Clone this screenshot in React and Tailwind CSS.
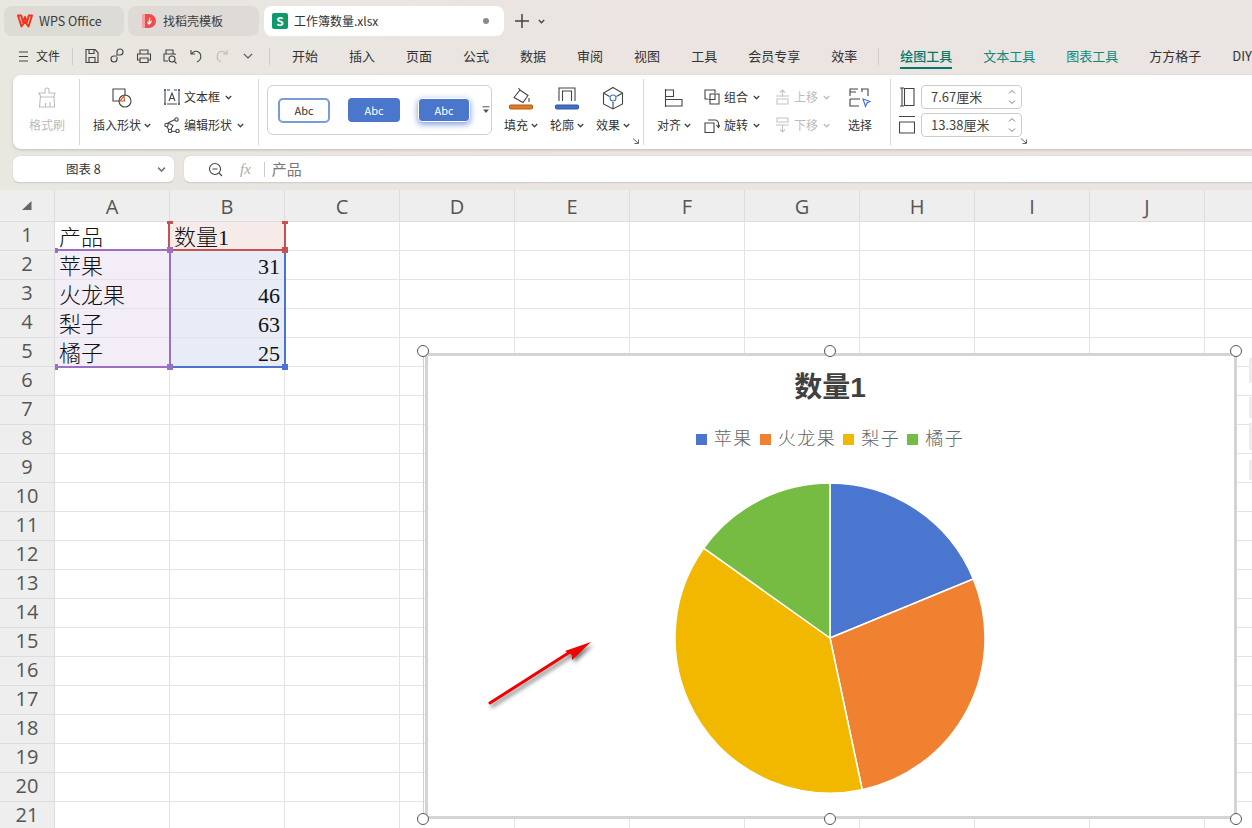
import React from "react";

const S = ({ w = 16, h = 16, vb, children, className = "" }) => (
  <svg width={w} height={h} viewBox={vb || `0 0 ${w} ${h}`} fill="none" stroke="#444" strokeWidth="1.1" className={"shrink-0 " + className}>
    {children}
  </svg>
);

const Caret = ({ c = "#444", className = "" }) => (
  <svg width="7" height="5" viewBox="0 0 7 5" fill="none" stroke={c} strokeWidth="1.3" className={"shrink-0 " + className}>
    <path d="M.8 1 3.5 3.8 6.2 1" />
  </svg>
);

const Launcher = ({ className = "" }) => (
  <svg width="6" height="6" viewBox="0 0 6 6" fill="none" stroke="#666" strokeWidth="1" className={className}>
    <path d="M0 .5 5 5M5.5 1.5v4h-4" />
  </svg>
);

const Big = ({ w, icon, label, caret = true, className = "" }) => (
  <div className={"flex flex-col items-center pt-[1px] shrink-0 " + className} style={{ width: w }}>
    <div className="h-[36px] flex items-center justify-center">{icon}</div>
    <div className="h-[18px] flex items-center gap-[3px] text-[12px] text-[#333] whitespace-nowrap">
      {label}
      {caret && <Caret />}
    </div>
  </div>
);

const Small = ({ icon, label, gray, w }) => (
  <div className="h-[18px] flex items-center gap-[4px] whitespace-nowrap" style={{ width: w }}>
    {icon}
    <span className={"text-[12px] " + (gray ? "text-[#bbb]" : "text-[#333]")}>{label}</span>
    <Caret c={gray ? "#bbb" : "#444"} className="ml-[1px]" />
  </div>
);

const Tabs = () => (
  <div className="flex h-[37px] pt-[6px] pl-[4px] items-start">
    <div className="w-[120px] h-[30px] rounded-lg bg-[#dcdbd5] flex items-center pl-[13px] gap-[6px] text-[12.5px] text-[#3a3a3a]">
      <svg width="16" height="14" viewBox="0 0 16 14" fill="none" stroke="#f2351f" strokeWidth="2">
        <path d="M1 1.500h3.200L6 8l2-5 2 5 1.800-6.500H15L11.500 12.500 8 7.500l-3.500 5z" strokeLinejoin="round" />
      </svg>
      <span>WPS Office</span>
    </div>
    <div className="w-[131px] h-[30px] ml-[4px] rounded-lg bg-[#dedbd6] flex items-center pl-[14px] gap-[7px] text-[12px] text-[#3a3a3a]">
      <svg width="14" height="16" viewBox="0 0 14 16">
        <path d="M0 1h7a7 7 0 0 1 0 14H0z" fill="#ee4d4d" />
        <path d="M0 1h3v14H0z" fill="#f5a3a0" />
        <path d="M8 4c.6 2-.3 3 .2 5 .5-1 1-1.300 1.800-1.700-.3 2-1.300 4-3 4.500C5.500 11 5 9.500 5.500 8c.3 1 .7 1.300 1.200 1.500C6.500 7.500 7 5.500 8 4z" fill="#fff" />
      </svg>
      <span>找稻壳模板</span>
    </div>
    <div className="w-[240px] h-[30px] ml-[5px] rounded-lg bg-white flex items-center pl-[8px] text-[12px] text-[#333]">
      <div className="w-[16px] h-[16px] rounded-[2px] bg-[#0d9a6c] text-white text-[12px] font-bold leading-[16px] text-center">S</div>
      <span className="ml-[6px]">工作簿数量.xlsx</span>
      <span className="ml-auto mr-[15px] w-[6px] h-[6px] rounded-full bg-[#8a8a8a]" />
    </div>
    <svg width="16" height="16" viewBox="0 0 16 16" stroke="#444" strokeWidth="1.5" className="ml-[10px] mt-[7px]">
      <path d="M8 1v14M1 8h14" />
    </svg>
    <Caret className="ml-[8px] mt-[13px]" />
  </div>
);

const qa = [
  <S key="1"><path d="M2 1.500h9l3 3v10H2zM5 1.500v4h5v-4M5 14.500v-5h6v5" /></S>,
  <S key="2"><path d="M7 7V4a3 3 0 1 1 3 3H7M7 9v2a3 3 0 1 1-3-3h3" /></S>,
  <S key="3"><path d="M4 6V2h8v4M4 12H1.500V6h13v6H12M4 10h8v4.500H4z" /></S>,
  <S key="4"><path d="M6 13H2V6h11v1M4 6V2h7v4" /><circle cx="10" cy="11" r="3" /><path d="m12.200 13.200 2.300 2.300" /></S>,
  <S key="5"><path d="M3 2v4h4M3.500 6C5 3.500 8 2.500 10.500 4c2.500 1.500 3 5 1.500 7.500-.8 1.200-1.800 2-3 2.500" /></S>,
  <S key="6"><g stroke="#bbb"><path d="M13 2v4H9M12.500 6C11 3.500 8 2.500 5.500 4c-2.500 1.500-3 5-1.500 7.500.8 1.200 1.800 2 3 2.500" /></g></S>,
  <div key="7" className="w-[16px] flex justify-center"><svg width="10" height="6" viewBox="0 0 10 6" fill="none" stroke="#555" strokeWidth="1.200"><path d="M.8.8 5 5 9.200.8" /></svg></div>,
];

const menuA = ["开始", "插入", "页面", "公式", "数据", "审阅", "视图", "工具", "会员专享", "效率"];

const Menu = () => (
  <div className="flex h-[38px] items-start pt-[6px] text-[13px] text-[#333] whitespace-nowrap overflow-hidden">
    <div className="h-[26px] flex items-center ml-[19px]">
      <svg width="9" height="11" viewBox="0 0 9 11" stroke="#444" strokeWidth="1.100"><path d="M0 1h9M0 5.500h9M0 10h9" /></svg>
      <span className="ml-[8px] text-[12px]">文件</span>
      <span className="ml-[12px] w-[1px] h-[17px] bg-[#cfcdc8]" />
    </div>
    <div className="h-[26px] flex items-center gap-[10px] ml-[11px]">{qa}</div>
    <div className="h-[26px] flex items-center ml-[13px]"><span className="w-[1px] h-[17px] bg-[#cfcdc8]" /></div>
    <div className="flex gap-[31px] ml-[22px]">
      {menuA.map((m) => (
        <span key={m} className="h-[26px] flex items-center">{m}</span>
      ))}
    </div>
    <div className="h-[26px] flex items-center mx-[21px]"><span className="w-[1px] h-[17px] bg-[#cfcdc8]" /></div>
    <div className="flex gap-[31px]">
      <span className="h-[26px] flex items-center border-y-2 border-t-transparent border-b-[#04796b] text-[#04796b] font-medium">绘图工具</span>
      <span className="h-[26px] flex items-center text-[#0c8a7c]">文本工具</span>
      <span className="h-[26px] flex items-center text-[#0c8a7c]">图表工具</span>
      <span className="h-[26px] flex items-center">方方格子</span>
      <span className="h-[26px] flex items-center">DIY</span>
    </div>
  </div>
);

const Ribbon = () => (
  <div className="ml-[13px] h-[74px] rounded-l-lg bg-white shadow-[0_1px_3px_rgba(0,0,0,0.18)] pt-[4px] flex overflow-hidden">
    {/* format painter */}
    <div className="w-[67px] h-[66px] border-r border-[#d8d8d8] shrink-0 flex justify-center pl-[2px]">
      <Big
        w={50}
        caret={false}
        label={<span className="text-[#bbb]">格式刷</span>}
        icon={
          <S w={20} h={22} vb="0 0 20 22">
            <g stroke="#bdbdbd"><path d="M8 6V3a2 2 0 0 1 4 0v3h6l-1 3 .500 11H2.500L3.500 9 2 6zM3 10h14.500M13 15v5M8.500 16v4" /></g>
          </S>
        }
      />
    </div>
    {/* shapes */}
    <div className="w-[179px] h-[66px] border-r border-[#d8d8d8] shrink-0 flex">
      <Big
        w={70}
        className="ml-[7px]"
        label="插入形状"
        icon={
          <S w={22} h={22}>
            <path d="M9 14H2V2h12v7" />
            <circle cx="14" cy="14" r="6" />
            <path d="M9 14l4-5 .500 5z" stroke="#d4521a" fill="#fff" />
          </S>
        }
      />
      <div className="flex flex-col gap-[10px] pt-[9px] ml-[7px]">
        <Small
          label="文本框"
          icon={
            <S w={16} h={16}>
              <path d="M1 1v14M15 1v14M3 1h3M10 1h3M3 15h10M5 12l3-8 3 8M6.200 9.500h3.600" />
              <path d="M0 0h2v2H0zM14 0h2v2h-2zM0 14h2v2H0zM14 14h2v2h-2z" fill="#3b6fd4" stroke="none" />
            </S>
          }
        />
        <Small
          label="编辑形状"
          icon={
            <S w={16} h={16}>
              <path d="M11 2.500 4 6 2.500 9l3 5 7 .5M4 6l5 2.500-3 5.500" />
              <circle cx="12.500" cy="2.500" r="1.700" fill="#fff" />
              <circle cx="2.500" cy="8" r="1.700" fill="#fff" />
              <circle cx="6" cy="14" r="1.700" fill="#fff" />
              <circle cx="13.500" cy="14" r="1.700" fill="#fff" />
            </S>
          }
        />
      </div>
    </div>
    {/* gallery + fill */}
    <div className="w-[385px] h-[66px] border-r border-[#d8d8d8] shrink-0 relative flex">
      <div className="ml-[8px] mt-[6px] w-[225px] h-[50px] rounded-md border border-[#cfcfcf] flex items-center pl-[10px] text-[11px] shrink-0">
        <div className="w-[52px] h-[25px] rounded-[5px] border-2 border-[#7b9ad9] flex items-center justify-center text-[#333]">Abc</div>
        <div className="w-[52px] h-[24px] ml-[18px] rounded-[4px] bg-[#4a76cc] flex items-center justify-center text-white">Abc</div>
        <div className="w-[52px] h-[24px] ml-[18px] rounded-[4px] bg-[#4a76cc] border border-white flex items-center justify-center text-white shadow-[0_2px_6px_rgba(60,100,200,0.7)]">Abc</div>
        <svg width="8" height="8" viewBox="0 0 8 8" className="ml-[12px] shrink-0" fill="#555" stroke="#555">
          <path d="M.5.800h7" />
          <path d="M1 3.500h6L4 7z" stroke="none" />
        </svg>
      </div>
      <div className="flex ml-[6px]">
        <Big
          w={46}
          label="填充"
          icon={
            <svg width="24" height="24" viewBox="0 0 24 24" fill="none" stroke="#444" strokeWidth="1.100">
              <path d="M5 11.500 11 4l8 5.500-5 7z" />
              <path d="M11 4 9.500 2M20 12v4" />
              <rect x="0.500" y="19" width="23" height="4" rx="1.500" fill="#e87722" stroke="#a9601f" />
            </svg>
          }
        />
        <Big
          w={46}
          label="轮廓"
          icon={
            <svg width="24" height="24" viewBox="0 0 24 24" fill="none" stroke="#444" strokeWidth="1.100">
              <path d="M4 15V2h16v13M7.500 15V5h9v10" />
              <rect x="0.500" y="19" width="23" height="4" rx="1.500" fill="#3f6ec9" stroke="#345a9f" />
            </svg>
          }
        />
        <Big
          w={46}
          label="效果"
          icon={
            <svg width="22" height="24" viewBox="0 0 22 24" fill="none" stroke="#444" strokeWidth="1.100">
              <path d="M11 1.500 20.500 7v11L11 23 1.500 18V7zM1.500 7l6 3.500M20.500 7l-6 3.500M11 16v7" />
              <circle cx="11" cy="12" r="3" stroke="#3d6fe0" />
            </svg>
          }
        />
      </div>
      <Launcher className="absolute right-[4px] bottom-[1px]" />
    </div>
    {/* arrange */}
    <div className="w-[247px] h-[66px] border-r border-[#d8d8d8] shrink-0 flex">
      <Big
        w={46}
        className="ml-[7px]"
        label="对齐"
        icon={
          <S w={20} h={20}>
            <path d="M1.500 1v18M1.500 2h8v6.500h-8M1.500 11.500H18V18H1.500" />
          </S>
        }
      />
      <div className="flex flex-col gap-[10px] pt-[9px] ml-[7px] w-[71px]">
        <Small
          label="组合"
          icon={
            <S w={16} h={16}>
              <path d="M4 10H1V1h10v3M6 5h9v10H6z" />
              <path d="M4.500 10.500H11V5" />
            </S>
          }
        />
        <Small
          label="旋转"
          icon={
            <S w={16} h={16}>
              <path d="M1 6h9v9.500H1zM4 3h7a3.500 3.500 0 0 1 3.500 3.500v3.500M12.500 8l2 2.500 1.500-2.500" />
            </S>
          }
        />
      </div>
      <div className="flex flex-col gap-[10px] pt-[9px]">
        <Small
          gray
          label="上移"
          icon={
            <S w={15} h={16}>
              <g stroke="#c4c4c4"><path d="M7.500 8V1M5 3.500 7.500 1 10 3.500M1 7h13M2 10h11v5H2z" /></g>
            </S>
          }
        />
        <Small
          gray
          label="下移"
          icon={
            <S w={15} h={16}>
              <g stroke="#c4c4c4"><path d="M2 1h11v4H2zM1 8h13M7.500 8v7M5 12.500 7.500 15 10 12.500" /></g>
            </S>
          }
        />
      </div>
      <Big
        w={40}
        className="ml-[10px]"
        caret={false}
        label="选择"
        icon={
          <svg width="22" height="20" viewBox="0 0 22 20" fill="none" stroke="#444" strokeWidth="1.100">
            <path d="M1 8V1h8M12 1h7v7M7 4H1M13 4V1M1 11v7h9M1 11h10" />
            <path d="M14 11l7 2.500-3 1.500-1.500 3.500z" stroke="#3d6fe0" fill="#fff" />
          </svg>
        }
      />
    </div>
    {/* size */}
    <div className="relative w-[140px] h-[66px] shrink-0 flex flex-col gap-[4px] pt-[6px] pl-[8px]">
      {[
        { v: "7.67厘米", ic: "M1 1h4M1 19h4M3 1v18M5.500 1.500H15v17H5.500z" },
        { v: "13.38厘米", ic: "M0 1.500h16M0 7h15.500v11H.5V7" },
      ].map((r) => (
        <div key={r.v} className="flex items-center h-[24px]">
          <S w={16} h={20}><path d={r.ic} /></S>
          <div className="ml-[6px] w-[101px] h-[24px] rounded-[4px] border border-[#cccccc] flex items-center pl-[9px] text-[13px] text-[#444]">
            {r.v}
            <svg width="8" height="16" viewBox="0 0 8 16" fill="none" stroke="#777" strokeWidth="1" className="ml-auto mr-[5px]">
              <path d="M1 4.500 4 1.500l3 3M1 11.500l3 3 3-3" />
            </svg>
          </div>
        </div>
      ))}
      <Launcher className="absolute left-[130px] bottom-[1px]" />
    </div>
  </div>
);

const FormulaBar = () => (
  <div className="flex h-[27px] mt-[7px] ml-[13px] gap-[10px]">
    <div className="w-[161px] h-[27px] bg-white rounded-md border-b border-[#cfcfcf] shadow-[0_0_1px_rgba(0,0,0,0.25)] flex items-center text-[12.5px] text-[#333]">
      <span className="ml-[53px] pt-[1px]">图表 8</span>
      <Caret c="#777" className="ml-auto mr-[9px] scale-125" />
    </div>
    <div className="flex-1 h-[27px] bg-white rounded-l-md border-b border-[#cfcfcf] shadow-[0_0_1px_rgba(0,0,0,0.25)] flex items-center">
      <S w={15} h={15} className="ml-[24px]">
        <circle cx="7" cy="7" r="5.500" />
        <path d="M4.500 7h5M11 11l3 3" />
      </S>
      <span className="ml-[17px] font-['Liberation_Serif',serif] italic text-[15px] text-[#aaa]">fx</span>
      <span className="ml-[13px] w-[1px] h-[15px] bg-[#ccc]" />
      <span className="ml-[7px] text-[15px] text-[#777]">产品</span>
    </div>
  </div>
);

const COLS = ["A", "B", "C", "D", "E", "F", "G", "H", "I", "J", ""];
const ROWS = Array.from({ length: 21 }, (_, i) => i + 1);
const DATA = {
  1: ["产品", "数量1"],
  2: ["苹果", "31"],
  3: ["火龙果", "46"],
  4: ["梨子", "63"],
  5: ["橘子", "25"],
};

const cellBg = (r, c) => {
  if (c === 0 && r >= 2 && r <= 5) return "bg-[#f2edf7]";
  if (c === 1 && r === 1) return "bg-[#f7ebe9]";
  if (c === 1 && r >= 2 && r <= 5) return "bg-[#e8ecf7]";
  return "bg-white";
};

const Handle = ({ c, cls }) => (
  <span className={"absolute w-[6px] h-[6px] " + c + " " + cls} />
);

const Grid = () => (
  <div>
    <div className="flex h-[32px] bg-[#eeeeee] border-b border-[#dddddd]">
      <div className="w-[55px] h-full border-r border-[#dddddd] flex items-center justify-center shrink-0">
        <svg width="10" height="9" viewBox="0 0 10 9"><path d="M9.500 0v9H0z" fill="#666" /></svg>
      </div>
      {COLS.map((c, i) => (
        <div key={i} className="w-[115px] h-full shrink-0 border-r border-[#dddddd] flex items-center justify-center pt-[3px] text-[20px] text-[#555] font-['Open_Sans',sans-serif]">
          {c}
        </div>
      ))}
    </div>
    {ROWS.map((r) => (
      <div key={r} className="flex h-[29px]">
        <div className="w-[55px] shrink-0 bg-[#eeeeee] border-r border-b border-[#dddddd] flex items-center justify-center pb-[2px] text-[20px] text-[#555] font-['Open_Sans',sans-serif]">
          {r}
        </div>
        {COLS.map((c, ci) => {
          const v = DATA[r] && DATA[r][ci];
          const num = v && /^\d+$/.test(v);
          return (
            <div
              key={ci}
              className={
                "w-[115px] shrink-0 border-r border-b border-[#e4e4e4] flex items-center overflow-hidden text-[22px] text-[#111] font-['Liberation_Serif','Noto_Sans_CJK_SC',serif] font-light leading-none pt-[3px] " +
                (num ? "justify-end pr-[4px] " : "pl-[4px] ") +
                cellBg(r, ci)
              }
            >
              {v}
            </div>
          );
        })}
      </div>
    ))}
  </div>
);

const Selections = () => (
  <>
    <span className="absolute left-[57px] top-[59px] w-[110px] h-[2px] bg-[#9a70c4]" />
    <span className="absolute left-[57px] top-[176px] w-[110px] h-[2px] bg-[#9a70c4]" />
    <span className="absolute left-[169px] top-[63px] w-[2px] h-[111px] bg-[#9a70c4]" />
    <span className="absolute left-[168px] top-[34px] w-[2px] h-[25px] bg-[#c75050]" />
    <span className="absolute left-[284px] top-[34px] w-[2px] h-[25px] bg-[#c75050]" />
    <span className="absolute left-[172px] top-[59px] w-[111px] h-[2px] bg-[#c75050]" />
    <span className="absolute left-[284px] top-[63px] w-[2px] h-[111px] bg-[#4a74cf]" />
    <span className="absolute left-[172px] top-[176px] w-[111px] h-[2px] bg-[#4a74cf]" />
    <Handle c="bg-[#c75050]" cls="left-[167px] top-[31px] !h-[3px]" />
    <Handle c="bg-[#c75050]" cls="left-[282px] top-[31px] !h-[3px]" />
    <Handle c="bg-[#c75050]" cls="left-[282px] top-[57px]" />
    <Handle c="bg-[#9a70c4]" cls="left-[55px] top-[58px] !w-[3px] !h-[5px]" />
    <Handle c="bg-[#9a70c4]" cls="left-[167px] top-[57px]" />
    <Handle c="bg-[#9a70c4]" cls="left-[55px] top-[174px] !w-[3px]" />
    <Handle c="bg-[#9a70c4]" cls="left-[167px] top-[174px]" />
    <Handle c="bg-[#4a74cf]" cls="left-[282px] top-[174px]" />
  </>
);

const PIE = [
  { v: 31, c: "#4a76cf" },
  { v: 46, c: "#f08130" },
  { v: 63, c: "#f2b800" },
  { v: 25, c: "#76bb42" },
];

const Pie = () => {
  const total = PIE.reduce((a, b) => a + b.v, 0);
  const R = 155;
  let acc = 0;
  const pt = (f) => {
    const a = f * Math.PI * 2;
    return [156 + R * Math.sin(a), 156 - R * Math.cos(a)];
  };
  return (
    <svg width="312" height="312" viewBox="0 0 312 312" className="mt-[33px] shrink-0">
      {PIE.map((p) => {
        const s = pt(acc / total);
        acc += p.v;
        const e = pt(acc / total);
        const large = p.v / total > 0.5 ? 1 : 0;
        return (
          <path
            key={p.c}
            d={`M156 156L${s[0]} ${s[1]}A${R} ${R} 0 ${large} 1 ${e[0]} ${e[1]}Z`}
            fill={p.c}
            stroke="#fff"
            strokeWidth="1.500"
          />
        );
      })}
    </svg>
  );
};

const legend = [
  ["苹果", "bg-[#4a76cf]"],
  ["火龙果", "bg-[#f08130]"],
  ["梨子", "bg-[#f2b800]"],
  ["橘子", "bg-[#76bb42]"],
];

const Dot = ({ cls }) => (
  <span className={"absolute w-[12px] h-[12px] rounded-full bg-white border border-[#555] " + cls} />
);

const Chart = () => (
  <div className="absolute left-[423px] top-[161px] w-[816px] h-[470px]">
    <div className="absolute left-0 top-0 w-[816px] h-[470px] border border-transparent border-l-[#cfcfcf] p-[1px]">
      <div className="w-full h-full bg-white border-[3px] border-[#d4d4d4] pr-[2px] flex flex-col items-center">
        <div className="h-[40px] mt-[12px] flex items-center text-[28px] font-bold text-[#404040] font-['Liberation_Sans','Noto_Sans_CJK_SC',sans-serif]">
          数量1
        </div>
        <div className="h-[20px] mt-[21px] flex items-center gap-[7px] text-[18px] font-light text-[#666] tracking-[1.5px] font-['Liberation_Serif','Noto_Sans_CJK_SC',serif]">
          {legend.map(([t, c]) => (
            <div key={t} className="flex items-center gap-[7px]">
              <span className={"w-[11px] h-[11px] " + c} />
              <span>{t}</span>
            </div>
          ))}
        </div>
        <Pie />
      </div>
    </div>
    <Dot cls="left-[-6px] top-[-6px]" />
    <Dot cls="left-[401px] top-[-6px]" />
    <Dot cls="left-[807px] top-[-6px]" />
    <Dot cls="left-[-6px] top-[462px]" />
    <Dot cls="left-[401px] top-[462px]" />
    <Dot cls="left-[807px] top-[462px]" />
  </div>
);

const Arrow = () => (
  <svg
    width="110"
    height="72"
    viewBox="0 0 110 72"
    className="absolute left-[486px] top-[448px] drop-shadow-[2px_3px_2px_rgba(0,0,0,0.55)]"
  >
    <path d="M4 65 84 14" stroke="#f00000" strokeWidth="3" strokeLinecap="round" />
    <path d="M105 4 79 13 86 17 86 22z" fill="#f00000" />
  </svg>
);

const EdgeBits = () => (
  <>
    <span className="absolute left-[1249px] top-[168px] w-[3px] h-[25px] bg-[#ececec]" />
    <span className="absolute left-[1249px] top-[207px] w-[3px] h-[21px] bg-[#ececec]" />
    <span className="absolute left-[1249px] top-[233px] w-[3px] h-[27px] bg-[#ececec]" />
    <span className="absolute left-[1249px] top-[270px] w-[3px] h-[20px] bg-[#ececec]" />
  </>
);

export default function App() {
  return (
    <div className="w-[1252px] h-[828px] overflow-hidden relative font-['Noto_Sans_CJK_SC','Noto_Sans',sans-serif] bg-white">
      <div className="h-[190px] bg-gradient-to-r from-[#e8e7e0] via-[#ebe4e1] to-[#eae4e2]">
        <Tabs />
        <Menu />
        <Ribbon />
        <FormulaBar />
      </div>
      <div className="relative h-[638px] overflow-hidden">
        <Grid />
        <Selections />
        <Chart />
        <Arrow />
        <EdgeBits />
      </div>
    </div>
  );
}
